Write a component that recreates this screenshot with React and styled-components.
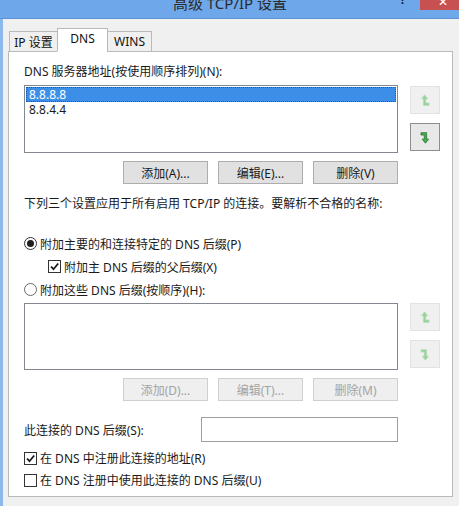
import React from "react";
import styled, { createGlobalStyle } from "styled-components";

const GlobalStyle = createGlobalStyle`
  html, body {
    margin: 0;
    padding: 0;
  }
  body {
    background: #f0f0f0;
    font-family: "Noto Sans", "Noto Sans CJK SC", sans-serif;
    font-size: 12px;
    color: #1a1a1a;
  }
  * {
    box-sizing: border-box;
  }
`;

function UpArrow({ enabled }) {
  return (
    <svg width="10" height="13" viewBox="0 0 12 16">
      <polygon
        points="11,14 4,14 4,6 1.5,6 5.5,1 9.5,6 7,6 7,11 11,11"
        fill={enabled ? "#3fb24a" : "#97d49b"}
        stroke={enabled ? "#1f5e25" : "#b9ddb9"}
        strokeWidth="0.8"
      />
    </svg>
  );
}

function DownArrow({ enabled }) {
  return (
    <svg width="10" height="13" viewBox="0 0 12 16">
      <polygon
        points="1,2 8,2 8,10 10.5,10 6.5,15 2.5,10 5,10 5,5 1,5"
        fill={enabled ? "#3fb24a" : "#97d49b"}
        stroke={enabled ? "#1f5e25" : "#b9ddb9"}
        strokeWidth="0.8"
      />
    </svg>
  );
}

function Check() {
  return (
    <svg width="11" height="11" viewBox="0 0 11 11">
      <path d="M2 5.5 L4.5 8.2 L9.2 2.5" fill="none" stroke="#1b1b1b" strokeWidth="1.8" />
    </svg>
  );
}

function App() {
  return (
    <>
      <GlobalStyle />
      <Window>
        <TitleBar>
          <Title>高级 TCP/IP 设置</Title>
          <Help>?</Help>
          <Close>✕</Close>
        </TitleBar>
        <Frame>
          <TabStrip>
            <Tab $w={49}>IP 设置</Tab>
            <Tab $w={51} $active>DNS</Tab>
            <Tab $w={45}>WINS</Tab>
          </TabStrip>
          <Panel>
            <Label>DNS 服务器地址(按使用顺序排列)(N):</Label>
            <ListRow $top={5}>
              <ListBox $h={68}>
                <ListItem $selected>8.8.8.8</ListItem>
                <ListItem>8.8.4.4</ListItem>
              </ListBox>
              <ArrowColumn $top={1}>
                <ArrowButton><UpArrow /></ArrowButton>
                <ArrowButton $enabled><DownArrow enabled /></ArrowButton>
              </ArrowColumn>
            </ListRow>
            <ButtonRow>
              <Button>添加(A)...</Button>
              <Button>编辑(E)...</Button>
              <Button>删除(V)</Button>
            </ButtonRow>
            <Info>下列三个设置应用于所有启用 TCP/IP 的连接。要解析不合格的名称:</Info>
            <Options>
              <OptionRow>
                <Radio $checked />
                附加主要的和连接特定的 DNS 后缀(P)
              </OptionRow>
              <OptionRow $indent={24}>
                <CheckBox><Check /></CheckBox>
                附加主 DNS 后缀的父后缀(X)
              </OptionRow>
              <OptionRow>
                <Radio />
                附加这些 DNS 后缀(按顺序)(H):
              </OptionRow>
            </Options>
            <ListRow $top={2}>
              <ListBox $h={67} />
              <ArrowColumn>
                <ArrowButton><UpArrow /></ArrowButton>
                <ArrowButton><DownArrow /></ArrowButton>
              </ArrowColumn>
            </ListRow>
            <ButtonRow>
              <Button disabled>添加(D)...</Button>
              <Button disabled>编辑(T)...</Button>
              <Button disabled>删除(M)</Button>
            </ButtonRow>
            <SuffixRow>
              此连接的 DNS 后缀(S):
              <TextInput />
            </SuffixRow>
            <Checks>
              <CheckRow>
                <CheckBox><Check /></CheckBox>
                在 DNS 中注册此连接的地址(R)
              </CheckRow>
              <CheckRow>
                <CheckBox />
                在 DNS 注册中使用此连接的 DNS 后缀(U)
              </CheckRow>
            </Checks>
          </Panel>
        </Frame>
      </Window>
    </>
  );
}

export default App;

const Window = styled.div`
  width: 459px;
  height: 506px;
  display: flex;
  flex-direction: column;
  background: #f0f0f0;
  overflow: hidden;
`;

const TitleBar = styled.div`
  height: 19px;
  flex: none;
  display: flex;
  align-items: flex-start;
  background: #6fa8ea;
  border-bottom: 1px solid #5c92d4;
  overflow: hidden;
`;

const Title = styled.div`
  flex: 1;
  text-align: center;
  padding-left: 60px;
  margin-top: -6px;
  font-size: 15px;
  line-height: 18px;
  color: #2b2b2b;
`;

const Help = styled.div`
  width: 14px;
  flex: none;
  margin-right: 6px;
  margin-top: -6px;
  font-size: 12px;
  font-weight: bold;
  line-height: 12px;
  color: #16243a;
`;

const Close = styled.div`
  width: 39px;
  height: 10px;
  flex: none;
  background: #c75050;
  color: #fff;
  text-align: center;
  font-size: 12px;
  line-height: 4px;
  padding-left: 6px;
  overflow: hidden;
`;

const Frame = styled.div`
  flex: 1;
  display: flex;
  flex-direction: column;
  border-left: 3px solid #8cb8ec;
  padding: 9px 6px 0 5px;
`;

const TabStrip = styled.div`
  display: flex;
  align-items: flex-end;
  padding-left: 2px;
  margin-bottom: -1px;
  position: relative;
  z-index: 1;
`;

const Tab = styled.div`
  width: ${(p) => p.$w}px;
  height: ${(p) => (p.$active ? 24 : 21)}px;
  margin-left: -1px;
  display: flex;
  align-items: center;
  justify-content: center;
  padding-bottom: ${(p) => (p.$active ? 3 : 0)}px;
  background: ${(p) => (p.$active ? "#fff" : "#f0f0f0")};
  border: 1px solid #b9b9b9;
  border-bottom-color: ${(p) => (p.$active ? "#fff" : "#b9b9b9")};
  color: #111;
`;

const Panel = styled.div`
  display: flex;
  flex-direction: column;
  background: #fff;
  border: 1px solid #b9b9b9;
  padding: 12px 0 5px 15px;
`;

const Label = styled.div`
  line-height: 16px;
`;

const ListRow = styled.div`
  display: flex;
  gap: 12px;
  margin-top: ${(p) => p.$top}px;
`;

const ListBox = styled.div`
  width: 374px;
  height: ${(p) => p.$h}px;
  border: 1px solid #828790;
  padding: 1px;
  background: #fff;
`;

const ListItem = styled.div`
  height: 15px;
  line-height: 13px;
  padding-left: 2px;
  overflow: hidden;
  color: ${(p) => (p.$selected ? "#fff" : "#1a1a1a")};
  background: ${(p) => (p.$selected ? "#3d8ee6" : "transparent")};
  border: 1px dotted ${(p) => (p.$selected ? "#1d5aa6" : "transparent")};
`;

const ArrowColumn = styled.div`
  display: flex;
  flex-direction: column;
  gap: 9px;
  margin-top: ${(p) => p.$top || 0}px;
`;

const ArrowButton = styled.div`
  width: 30px;
  height: 28px;
  display: flex;
  align-items: center;
  justify-content: center;
  background: ${(p) => (p.$enabled ? "#e8e8e8" : "#f0f0f0")};
  border: 1px solid ${(p) => (p.$enabled ? "#8e8e8e" : "#e2e2e2")};
`;

const ButtonRow = styled.div`
  width: 374px;
  display: flex;
  justify-content: flex-end;
  gap: 10px;
  margin-top: 8px;
`;

const Button = styled.button`
  width: 85px;
  height: 23px;
  padding: 0;
  font: inherit;
  color: #1a1a1a;
  background: #e1e1e1;
  border: 1px solid #adadad;

  &:disabled {
    color: #a3a3a3;
    background: #efefef;
    border-color: #cfcfcf;
  }
`;

const Info = styled.div`
  margin-top: 12px;
  line-height: 16px;
`;

const Options = styled.div`
  margin-top: 20px;
  display: flex;
  flex-direction: column;
`;

const OptionRow = styled.div`
  height: 23px;
  display: flex;
  align-items: center;
  gap: 3px;
  padding-left: ${(p) => p.$indent || 0}px;
`;

const Radio = styled.span`
  width: 13px;
  height: 13px;
  flex: none;
  border-radius: 50%;
  border: 1px solid ${(p) => (p.$checked ? "#333" : "#6a6a6a")};
  background: #fff;
  display: flex;
  align-items: center;
  justify-content: center;

  &::after {
    content: "";
    width: 7px;
    height: 7px;
    border-radius: 50%;
    background: ${(p) => (p.$checked ? "#1e1e1e" : "transparent")};
  }
`;

const CheckBox = styled.span`
  width: 13px;
  height: 13px;
  flex: none;
  border: 1px solid #333;
  background: #fff;
  display: flex;
  align-items: center;
  justify-content: center;
`;

const SuffixRow = styled.div`
  width: 374px;
  margin-top: 16px;
  display: flex;
  align-items: center;
  justify-content: space-between;
`;

const TextInput = styled.div`
  width: 197px;
  height: 25px;
  border: 1px solid #9e9e9e;
  background: #fff;
`;

const Checks = styled.div`
  margin-top: 5px;
  display: flex;
  flex-direction: column;
`;

const CheckRow = styled.div`
  height: 22px;
  display: flex;
  align-items: center;
  gap: 3px;
`;
